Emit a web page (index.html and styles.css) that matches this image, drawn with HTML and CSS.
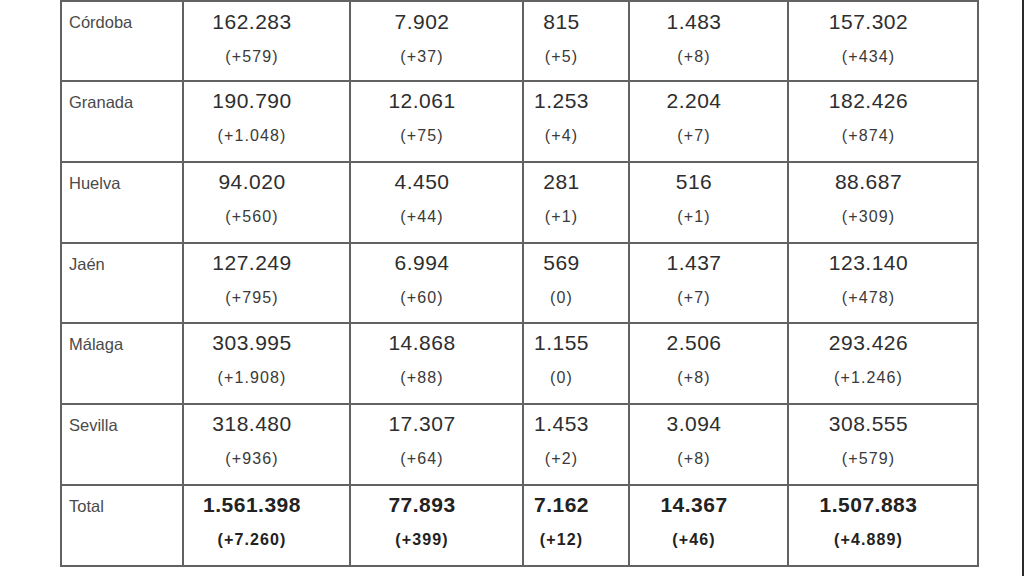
FILE: index.html
```html
<!DOCTYPE html>
<html lang="es">
<head>
<meta charset="utf-8">
<title>Datos por provincia</title>
<link rel="stylesheet" href="styles.css">
</head>
<body>
<main class="page">
  <div class="grid">
    <div class="cell name">Córdoba</div>
    <div class="cell val"><div class="main">162.283</div><div class="sub">(+579)</div></div>
    <div class="cell val"><div class="main">7.902</div><div class="sub">(+37)</div></div>
    <div class="cell val"><div class="main">815</div><div class="sub">(+5)</div></div>
    <div class="cell val"><div class="main">1.483</div><div class="sub">(+8)</div></div>
    <div class="cell val"><div class="main">157.302</div><div class="sub">(+434)</div></div>

    <div class="cell name">Granada</div>
    <div class="cell val"><div class="main">190.790</div><div class="sub">(+1.048)</div></div>
    <div class="cell val"><div class="main">12.061</div><div class="sub">(+75)</div></div>
    <div class="cell val"><div class="main">1.253</div><div class="sub">(+4)</div></div>
    <div class="cell val"><div class="main">2.204</div><div class="sub">(+7)</div></div>
    <div class="cell val"><div class="main">182.426</div><div class="sub">(+874)</div></div>

    <div class="cell name">Huelva</div>
    <div class="cell val"><div class="main">94.020</div><div class="sub">(+560)</div></div>
    <div class="cell val"><div class="main">4.450</div><div class="sub">(+44)</div></div>
    <div class="cell val"><div class="main">281</div><div class="sub">(+1)</div></div>
    <div class="cell val"><div class="main">516</div><div class="sub">(+1)</div></div>
    <div class="cell val"><div class="main">88.687</div><div class="sub">(+309)</div></div>

    <div class="cell name">Jaén</div>
    <div class="cell val"><div class="main">127.249</div><div class="sub">(+795)</div></div>
    <div class="cell val"><div class="main">6.994</div><div class="sub">(+60)</div></div>
    <div class="cell val"><div class="main">569</div><div class="sub">(0)</div></div>
    <div class="cell val"><div class="main">1.437</div><div class="sub">(+7)</div></div>
    <div class="cell val"><div class="main">123.140</div><div class="sub">(+478)</div></div>

    <div class="cell name">Málaga</div>
    <div class="cell val"><div class="main">303.995</div><div class="sub">(+1.908)</div></div>
    <div class="cell val"><div class="main">14.868</div><div class="sub">(+88)</div></div>
    <div class="cell val"><div class="main">1.155</div><div class="sub">(0)</div></div>
    <div class="cell val"><div class="main">2.506</div><div class="sub">(+8)</div></div>
    <div class="cell val"><div class="main">293.426</div><div class="sub">(+1.246)</div></div>

    <div class="cell name">Sevilla</div>
    <div class="cell val"><div class="main">318.480</div><div class="sub">(+936)</div></div>
    <div class="cell val"><div class="main">17.307</div><div class="sub">(+64)</div></div>
    <div class="cell val"><div class="main">1.453</div><div class="sub">(+2)</div></div>
    <div class="cell val"><div class="main">3.094</div><div class="sub">(+8)</div></div>
    <div class="cell val"><div class="main">308.555</div><div class="sub">(+579)</div></div>

    <div class="cell name">Total</div>
    <div class="cell val total"><div class="main">1.561.398</div><div class="sub">(+7.260)</div></div>
    <div class="cell val total"><div class="main">77.893</div><div class="sub">(+399)</div></div>
    <div class="cell val total"><div class="main">7.162</div><div class="sub">(+12)</div></div>
    <div class="cell val total"><div class="main">14.367</div><div class="sub">(+46)</div></div>
    <div class="cell val total"><div class="main">1.507.883</div><div class="sub">(+4.889)</div></div>
  </div>
</main>
</body>
</html>
```

FILE: styles.css
```css
* { box-sizing: border-box; }

html, body {
  margin: 0;
  padding: 0;
  background: #ffffff;
}

body {
  width: 1024px;
  height: 576px;
  overflow: hidden;
  border-right: 2px solid #2a2a2a;
  font-family: "Liberation Sans", Arial, sans-serif;
  color: #333333;
}

.page {
  padding-left: 60px;
}

.grid {
  display: grid;
  width: 919px;
  grid-template-columns: 120px 165px 171px 104px 157px 188px;
  grid-template-rows: 78px 79px 79px 78px 79px 79px 79px;
  gap: 2px;
  padding: 2px;
  background: #626262;
}

.cell {
  background: #ffffff;
}

.grid .val:nth-child(-n+6) {
  padding-top: 1px;
}

.name {
  padding-left: 7px;
  font-size: 16.5px;
  line-height: 20px;
  color: #4a4a4a;
}

.name::before {
  content: "";
  display: block;
  height: 10px;
}

.val {
  text-align: center;
  padding-right: 29px;
}

.val::before {
  content: "";
  display: block;
  height: 7px;
}

.main {
  font-size: 21px;
  line-height: 24px;
  letter-spacing: 0.5px;
  color: #2e2e2e;
}

.sub {
  margin-top: 13px;
  font-size: 16px;
  line-height: 20px;
  letter-spacing: 1.1px;
  color: #3a3a3a;
}

.total .main,
.total .sub {
  font-weight: bold;
  color: #222222;
}
```
